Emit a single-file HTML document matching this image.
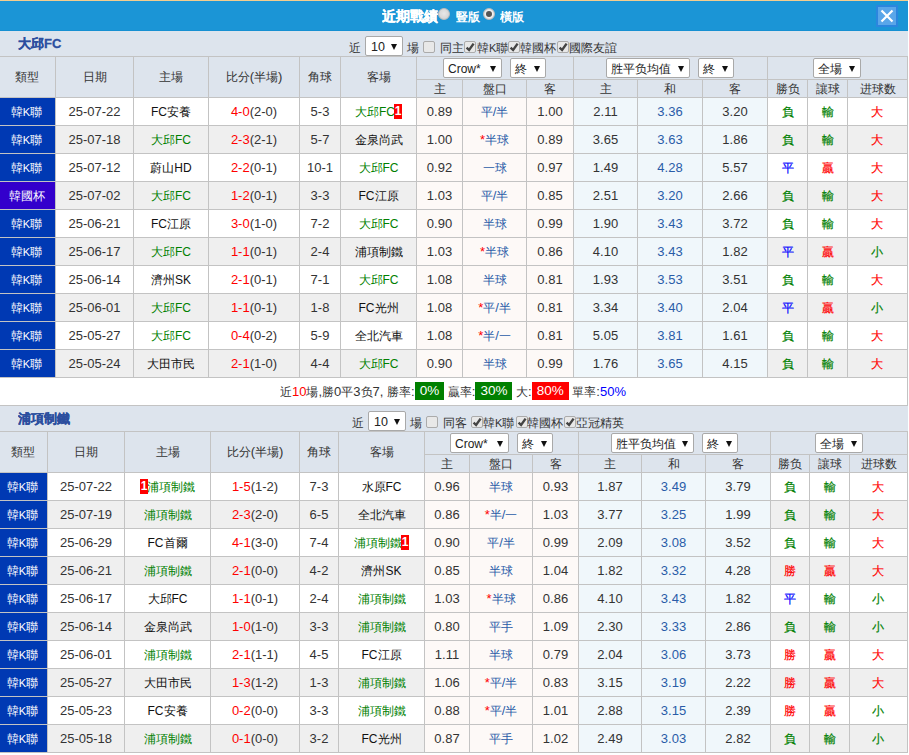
<!DOCTYPE html><html><head><meta charset="utf-8"><style>
html,body{margin:0;padding:0;background:#fff;width:909px;height:755px;overflow:hidden;position:relative;font-family:"Liberation Sans",sans-serif;}
.t,.h,.d{position:absolute;text-align:center;white-space:nowrap;overflow:hidden;}
.h{font-size:13px;color:#333;}
.d{font-size:13px;color:#333;}
.f{position:absolute;font-size:13px;color:#333;line-height:25px;white-space:nowrap}
.sel{position:absolute;background:#fff;border:1px solid #a9a9a9;border-radius:2px;font-size:13px;color:#222;text-align:center;white-space:nowrap}
.cb{position:absolute;width:10px;height:10px;border:1px solid #ababab;border-radius:2px;background:#e8e8e8;}
.ar{position:absolute;width:0;height:0;border-left:3.5px solid transparent;border-right:3.5px solid transparent;border-top:6px solid #111}
.radio{position:absolute;width:10px;height:10px;border-radius:50%;background:radial-gradient(circle at 50% 45%,#e8e8e8 0,#d8d8d8 60%,#c4c4c4 100%);border:1px solid #bdbdbd}
.radio.on{background:radial-gradient(circle,#f4f4f4 0,#f0f0f0 50%,#c8c8c8 100%)}.radio.on::after{content:"";position:absolute;left:2px;top:2px;width:6px;height:6px;border-radius:50%;background:#555}
.d .c,.h .c,.f .c,.sel .c{font-size:12px}
.lt{font-size:12px}
.rs .c{-webkit-text-stroke:0.2px currentColor}
.lk{font-size:11px}
.bd{display:inline-block;background:#f00;color:#fff;font-weight:bold;font-size:12px;line-height:15px;width:8px;text-align:center;vertical-align:middle;position:relative;top:-1px}
.gb{display:inline-block;background:#008000;color:#fff;font-size:13.5px;line-height:18px;padding:0 5px;vertical-align:middle;position:relative;top:-2px}
.rb{display:inline-block;background:#f00;color:#fff;font-size:13.5px;line-height:18px;padding:0 5px;vertical-align:middle;position:relative;top:-2px}
</style></head><body><div style="position:absolute;left:0px;top:0px;width:908px;height:1px;background:#f3cd8e"></div><div style="position:absolute;left:0px;top:1px;width:908px;height:30px;background:#1b95d6"></div><div style="position:absolute;left:0px;top:30px;width:908px;height:1px;background:#1690d2"></div><div class="t" style="left:382px;top:1px;width:58px;height:30px;line-height:30px;color:#fff;font-weight:bold;font-size:14px;text-align:left;-webkit-text-stroke:0.3px #fff"><span class="c">近期戰績</span></div><div class="radio" style="left:438px;top:8px"></div><div class="t" style="left:456px;top:2px;width:26px;height:30px;line-height:30px;color:#fff;font-weight:bold;font-size:12px;text-align:left"><span class="c">豎版</span></div><div class="radio on" style="left:483px;top:8px"></div><div class="t" style="left:500px;top:2px;width:30px;height:30px;line-height:30px;color:#fff;font-weight:bold;font-size:12px;text-align:left"><span class="c">橫版</span></div><div style="position:absolute;left:876px;top:5px;width:22px;height:22px;background:#2b86de"></div><div style="position:absolute;left:878px;top:7px;width:18px;height:18px;background:#5aa6e9"></div><svg style="position:absolute;left:878px;top:7px" width="18" height="18" viewBox="0 0 18 18"><path d="M3.5 3.5 L14.5 14.5 M14.5 3.5 L3.5 14.5" stroke="#fff" stroke-width="2.2"/></svg><div style="position:absolute;left:0px;top:31px;width:908px;height:25px;background:#dde4ed"></div><div class="t" style="left:18px;top:31px;width:182px;height:25px;line-height:25px;color:#2c4f9f;font-weight:bold;font-size:13px;text-align:left;-webkit-text-stroke:0.3px #2c4f9f"><span class="c">大邱</span>FC</div><div class="f" style="left:349px;top:35px"><span class="c">近</span></div><div class="sel" style="left:365px;top:36px;width:36px;height:18px;line-height:18px;text-align:left"><span style="position:absolute;left:5px;top:1px;font-size:12.5px">10</span><span class="ar" style="left:25px;top:7px"></span></div><div class="f" style="left:407px;top:35px"><span class="c">場</span></div><div class="cb" style="left:423px;top:41px"></div><div class="f" style="left:440px;top:35px"><span class="c">同主</span></div><div class="cb" style="left:464px;top:41px"><svg width="10" height="10" viewBox="0 0 10 10" style="position:absolute;left:0px;top:0px"><path d="M1.6 5.6 L4.1 8 L8.6 1.6" stroke="#444" stroke-width="2.4" fill="none"/></svg></div><div class="f" style="left:477px;top:35px"><span class="c">韓</span><span class=lk>K</span><span class="c">聯</span></div><div class="cb" style="left:508px;top:41px"><svg width="10" height="10" viewBox="0 0 10 10" style="position:absolute;left:0px;top:0px"><path d="M1.6 5.6 L4.1 8 L8.6 1.6" stroke="#444" stroke-width="2.4" fill="none"/></svg></div><div class="f" style="left:520px;top:35px"><span class="c">韓國杯</span></div><div class="cb" style="left:557px;top:41px"><svg width="10" height="10" viewBox="0 0 10 10" style="position:absolute;left:0px;top:0px"><path d="M1.6 5.6 L4.1 8 L8.6 1.6" stroke="#444" stroke-width="2.4" fill="none"/></svg></div><div class="f" style="left:569px;top:35px"><span class="c">國際友誼</span></div><div style="position:absolute;left:0px;top:56px;width:908px;height:41px;background:#dde4ed"></div><div style="position:absolute;left:0px;top:56px;width:908px;height:1px;background:#c3c3c3"></div><div style="position:absolute;left:416px;top:79px;width:492px;height:1px;background:#c3c3c3"></div><div style="position:absolute;left:0px;top:97px;width:908px;height:1px;background:#c3c3c3"></div><div style="position:absolute;left:55px;top:56px;width:1px;height:41px;background:#c3c3c3"></div><div style="position:absolute;left:133px;top:56px;width:1px;height:41px;background:#c3c3c3"></div><div style="position:absolute;left:208px;top:56px;width:1px;height:41px;background:#c3c3c3"></div><div style="position:absolute;left:299px;top:56px;width:1px;height:41px;background:#c3c3c3"></div><div style="position:absolute;left:340px;top:56px;width:1px;height:41px;background:#c3c3c3"></div><div style="position:absolute;left:416px;top:56px;width:1px;height:41px;background:#c3c3c3"></div><div style="position:absolute;left:462px;top:79px;width:1px;height:18px;background:#c3c3c3"></div><div style="position:absolute;left:526px;top:79px;width:1px;height:18px;background:#c3c3c3"></div><div style="position:absolute;left:573px;top:56px;width:1px;height:41px;background:#c3c3c3"></div><div style="position:absolute;left:637px;top:79px;width:1px;height:18px;background:#c3c3c3"></div><div style="position:absolute;left:702px;top:79px;width:1px;height:18px;background:#c3c3c3"></div><div style="position:absolute;left:767px;top:56px;width:1px;height:41px;background:#c3c3c3"></div><div style="position:absolute;left:807px;top:79px;width:1px;height:18px;background:#c3c3c3"></div><div style="position:absolute;left:847px;top:79px;width:1px;height:18px;background:#c3c3c3"></div><div style="position:absolute;left:907px;top:56px;width:1px;height:41px;background:#c3c3c3"></div><div class="h" style="left:0px;top:57px;width:53px;height:40px;line-height:40px;"><span class="c">類型</span></div><div class="h" style="left:56px;top:57px;width:77px;height:40px;line-height:40px;"><span class="c">日期</span></div><div class="h" style="left:134px;top:57px;width:74px;height:40px;line-height:40px;"><span class="c">主場</span></div><div class="h" style="left:209px;top:57px;width:90px;height:40px;line-height:40px;"><span class="c">比分</span>(<span class="c">半場</span>)</div><div class="h" style="left:300px;top:57px;width:40px;height:40px;line-height:40px;"><span class="c">角球</span></div><div class="h" style="left:341px;top:57px;width:75px;height:40px;line-height:40px;"><span class="c">客場</span></div><div class="h" style="left:417px;top:80px;width:45px;height:17px;line-height:17px;"><span class="c">主</span></div><div class="h" style="left:463px;top:80px;width:63px;height:17px;line-height:17px;"><span class="c">盤口</span></div><div class="h" style="left:527px;top:80px;width:46px;height:17px;line-height:17px;"><span class="c">客</span></div><div class="h" style="left:574px;top:80px;width:63px;height:17px;line-height:17px;"><span class="c">主</span></div><div class="h" style="left:638px;top:80px;width:64px;height:17px;line-height:17px;"><span class="c">和</span></div><div class="h" style="left:703px;top:80px;width:64px;height:17px;line-height:17px;"><span class="c">客</span></div><div class="h" style="left:768px;top:80px;width:39px;height:17px;line-height:17px;"><span class="c">勝负</span></div><div class="h" style="left:808px;top:80px;width:39px;height:17px;line-height:17px;"><span class="c">讓球</span></div><div class="h" style="left:848px;top:80px;width:59px;height:17px;line-height:17px;"><span class="c">进球数</span></div><div class="sel" style="left:443px;top:58px;width:57px;height:18px;line-height:18px;text-align:left"><span style="position:absolute;left:4px;top:1px;font-size:12px">Crow*</span><span class="ar" style="right:5px;top:7px"></span></div><div class="sel" style="left:510px;top:58px;width:34px;height:18px;line-height:18px;text-align:left"><span style="position:absolute;left:4px;top:1px;font-size:12px"><span class="c">終</span></span><span class="ar" style="right:5px;top:7px"></span></div><div class="sel" style="left:606px;top:58px;width:82px;height:18px;line-height:18px;text-align:left"><span style="position:absolute;left:4px;top:1px;font-size:12px"><span class="c">胜平负均值</span></span><span class="ar" style="right:5px;top:7px"></span></div><div class="sel" style="left:698px;top:58px;width:34px;height:18px;line-height:18px;text-align:left"><span style="position:absolute;left:4px;top:1px;font-size:12px"><span class="c">終</span></span><span class="ar" style="right:5px;top:7px"></span></div><div class="sel" style="left:813px;top:58px;width:46px;height:18px;line-height:18px;text-align:left"><span style="position:absolute;left:4px;top:1px;font-size:12px"><span class="c">全場</span></span><span class="ar" style="right:5px;top:7px"></span></div><div style="position:absolute;left:0px;top:98px;width:908px;height:27px;background:#ffffff"></div><div style="position:absolute;left:417px;top:98px;width:156px;height:27px;background:#fdf9f7"></div><div style="position:absolute;left:574px;top:98px;width:193px;height:27px;background:#f0f7fb"></div><div style="position:absolute;left:0px;top:98px;width:55px;height:27px;background:#0039b3"></div><div style="position:absolute;left:0px;top:125px;width:908px;height:1px;background:#c3c3c3"></div><div style="position:absolute;left:55px;top:98px;width:1px;height:27px;background:#c3c3c3"></div><div style="position:absolute;left:133px;top:98px;width:1px;height:27px;background:#c3c3c3"></div><div style="position:absolute;left:208px;top:98px;width:1px;height:27px;background:#c3c3c3"></div><div style="position:absolute;left:299px;top:98px;width:1px;height:27px;background:#c3c3c3"></div><div style="position:absolute;left:340px;top:98px;width:1px;height:27px;background:#c3c3c3"></div><div style="position:absolute;left:416px;top:98px;width:1px;height:27px;background:#c3c3c3"></div><div style="position:absolute;left:462px;top:98px;width:1px;height:27px;background:#c3c3c3"></div><div style="position:absolute;left:526px;top:98px;width:1px;height:27px;background:#c3c3c3"></div><div style="position:absolute;left:573px;top:98px;width:1px;height:27px;background:#c3c3c3"></div><div style="position:absolute;left:637px;top:98px;width:1px;height:27px;background:#c3c3c3"></div><div style="position:absolute;left:702px;top:98px;width:1px;height:27px;background:#c3c3c3"></div><div style="position:absolute;left:767px;top:98px;width:1px;height:27px;background:#c3c3c3"></div><div style="position:absolute;left:807px;top:98px;width:1px;height:27px;background:#c3c3c3"></div><div style="position:absolute;left:847px;top:98px;width:1px;height:27px;background:#c3c3c3"></div><div style="position:absolute;left:907px;top:98px;width:1px;height:27px;background:#c3c3c3"></div><div class="d" style="left:0px;top:98px;width:53px;height:27px;line-height:27px;"><span style="color:#fff"><span class="c">韓</span><span class=lk>K</span><span class="c">聯</span></span></div><div class="d" style="left:56px;top:98px;width:77px;height:27px;line-height:27px;">25-07-22</div><div class="d" style="left:134px;top:98px;width:74px;height:27px;line-height:27px;"><span style="color:#111"><span class="lt">FC</span><span class="c">安養</span></span></div><div class="d" style="left:209px;top:98px;width:90px;height:27px;line-height:27px;"><span style="color:#ff0000">4-0</span>(2-0)</div><div class="d" style="left:300px;top:98px;width:40px;height:27px;line-height:27px;">5-3</div><div class="d" style="left:341px;top:98px;width:75px;height:27px;line-height:27px;"><span style="color:#008000"><span class="c">大邱</span><span class="lt">FC</span></span><span class="bd" style="margin-left:-1px">1</span></div><div class="d" style="left:417px;top:98px;width:45px;height:27px;line-height:27px;">0.89</div><div class="d" style="left:463px;top:98px;width:63px;height:27px;line-height:27px;"><span style="color:#2a5ca8"><span class="c">平</span>/<span class="c">半</span></span></div><div class="d" style="left:527px;top:98px;width:46px;height:27px;line-height:27px;">1.00</div><div class="d" style="left:574px;top:98px;width:63px;height:27px;line-height:27px;">2.11</div><div class="d" style="left:638px;top:98px;width:64px;height:27px;line-height:27px;"><span style="color:#2a5ca8">3.36</span></div><div class="d" style="left:703px;top:98px;width:64px;height:27px;line-height:27px;">3.20</div><div class="d" style="left:768px;top:98px;width:39px;height:27px;line-height:27px;"><span class="rs" style="color:#008000"><span class="c">負</span></span></div><div class="d" style="left:808px;top:98px;width:39px;height:27px;line-height:27px;"><span class="rs" style="color:#008000"><span class="c">輸</span></span></div><div class="d" style="left:848px;top:98px;width:57px;height:27px;line-height:27px;"><span class="rs" style="color:#ff0000"><span class="c">大</span></span></div><div style="position:absolute;left:0px;top:126px;width:908px;height:27px;background:#efefef"></div><div style="position:absolute;left:417px;top:126px;width:156px;height:27px;background:#fdf9f7"></div><div style="position:absolute;left:574px;top:126px;width:193px;height:27px;background:#f0f7fb"></div><div style="position:absolute;left:0px;top:126px;width:55px;height:27px;background:#0039b3"></div><div style="position:absolute;left:0px;top:153px;width:908px;height:1px;background:#c3c3c3"></div><div style="position:absolute;left:55px;top:126px;width:1px;height:27px;background:#c3c3c3"></div><div style="position:absolute;left:133px;top:126px;width:1px;height:27px;background:#c3c3c3"></div><div style="position:absolute;left:208px;top:126px;width:1px;height:27px;background:#c3c3c3"></div><div style="position:absolute;left:299px;top:126px;width:1px;height:27px;background:#c3c3c3"></div><div style="position:absolute;left:340px;top:126px;width:1px;height:27px;background:#c3c3c3"></div><div style="position:absolute;left:416px;top:126px;width:1px;height:27px;background:#c3c3c3"></div><div style="position:absolute;left:462px;top:126px;width:1px;height:27px;background:#c3c3c3"></div><div style="position:absolute;left:526px;top:126px;width:1px;height:27px;background:#c3c3c3"></div><div style="position:absolute;left:573px;top:126px;width:1px;height:27px;background:#c3c3c3"></div><div style="position:absolute;left:637px;top:126px;width:1px;height:27px;background:#c3c3c3"></div><div style="position:absolute;left:702px;top:126px;width:1px;height:27px;background:#c3c3c3"></div><div style="position:absolute;left:767px;top:126px;width:1px;height:27px;background:#c3c3c3"></div><div style="position:absolute;left:807px;top:126px;width:1px;height:27px;background:#c3c3c3"></div><div style="position:absolute;left:847px;top:126px;width:1px;height:27px;background:#c3c3c3"></div><div style="position:absolute;left:907px;top:126px;width:1px;height:27px;background:#c3c3c3"></div><div class="d" style="left:0px;top:126px;width:53px;height:27px;line-height:27px;"><span style="color:#fff"><span class="c">韓</span><span class=lk>K</span><span class="c">聯</span></span></div><div class="d" style="left:56px;top:126px;width:77px;height:27px;line-height:27px;">25-07-18</div><div class="d" style="left:134px;top:126px;width:74px;height:27px;line-height:27px;"><span style="color:#008000"><span class="c">大邱</span><span class="lt">FC</span></span></div><div class="d" style="left:209px;top:126px;width:90px;height:27px;line-height:27px;"><span style="color:#ff0000">2-3</span>(2-1)</div><div class="d" style="left:300px;top:126px;width:40px;height:27px;line-height:27px;">5-7</div><div class="d" style="left:341px;top:126px;width:75px;height:27px;line-height:27px;"><span style="color:#111"><span class="c">金泉尚武</span></span></div><div class="d" style="left:417px;top:126px;width:45px;height:27px;line-height:27px;">1.00</div><div class="d" style="left:463px;top:126px;width:63px;height:27px;line-height:27px;"><span style="color:#ff0000">*</span><span style="color:#2a5ca8"><span class="c">半球</span></span></div><div class="d" style="left:527px;top:126px;width:46px;height:27px;line-height:27px;">0.89</div><div class="d" style="left:574px;top:126px;width:63px;height:27px;line-height:27px;">3.65</div><div class="d" style="left:638px;top:126px;width:64px;height:27px;line-height:27px;"><span style="color:#2a5ca8">3.63</span></div><div class="d" style="left:703px;top:126px;width:64px;height:27px;line-height:27px;">1.86</div><div class="d" style="left:768px;top:126px;width:39px;height:27px;line-height:27px;"><span class="rs" style="color:#008000"><span class="c">負</span></span></div><div class="d" style="left:808px;top:126px;width:39px;height:27px;line-height:27px;"><span class="rs" style="color:#008000"><span class="c">輸</span></span></div><div class="d" style="left:848px;top:126px;width:57px;height:27px;line-height:27px;"><span class="rs" style="color:#ff0000"><span class="c">大</span></span></div><div style="position:absolute;left:0px;top:154px;width:908px;height:27px;background:#ffffff"></div><div style="position:absolute;left:417px;top:154px;width:156px;height:27px;background:#fdf9f7"></div><div style="position:absolute;left:574px;top:154px;width:193px;height:27px;background:#f0f7fb"></div><div style="position:absolute;left:0px;top:154px;width:55px;height:27px;background:#0039b3"></div><div style="position:absolute;left:0px;top:181px;width:908px;height:1px;background:#c3c3c3"></div><div style="position:absolute;left:55px;top:154px;width:1px;height:27px;background:#c3c3c3"></div><div style="position:absolute;left:133px;top:154px;width:1px;height:27px;background:#c3c3c3"></div><div style="position:absolute;left:208px;top:154px;width:1px;height:27px;background:#c3c3c3"></div><div style="position:absolute;left:299px;top:154px;width:1px;height:27px;background:#c3c3c3"></div><div style="position:absolute;left:340px;top:154px;width:1px;height:27px;background:#c3c3c3"></div><div style="position:absolute;left:416px;top:154px;width:1px;height:27px;background:#c3c3c3"></div><div style="position:absolute;left:462px;top:154px;width:1px;height:27px;background:#c3c3c3"></div><div style="position:absolute;left:526px;top:154px;width:1px;height:27px;background:#c3c3c3"></div><div style="position:absolute;left:573px;top:154px;width:1px;height:27px;background:#c3c3c3"></div><div style="position:absolute;left:637px;top:154px;width:1px;height:27px;background:#c3c3c3"></div><div style="position:absolute;left:702px;top:154px;width:1px;height:27px;background:#c3c3c3"></div><div style="position:absolute;left:767px;top:154px;width:1px;height:27px;background:#c3c3c3"></div><div style="position:absolute;left:807px;top:154px;width:1px;height:27px;background:#c3c3c3"></div><div style="position:absolute;left:847px;top:154px;width:1px;height:27px;background:#c3c3c3"></div><div style="position:absolute;left:907px;top:154px;width:1px;height:27px;background:#c3c3c3"></div><div class="d" style="left:0px;top:154px;width:53px;height:27px;line-height:27px;"><span style="color:#fff"><span class="c">韓</span><span class=lk>K</span><span class="c">聯</span></span></div><div class="d" style="left:56px;top:154px;width:77px;height:27px;line-height:27px;">25-07-12</div><div class="d" style="left:134px;top:154px;width:74px;height:27px;line-height:27px;"><span style="color:#111"><span class="c">蔚山</span><span class="lt">HD</span></span></div><div class="d" style="left:209px;top:154px;width:90px;height:27px;line-height:27px;"><span style="color:#ff0000">2-2</span>(0-1)</div><div class="d" style="left:300px;top:154px;width:40px;height:27px;line-height:27px;">10-1</div><div class="d" style="left:341px;top:154px;width:75px;height:27px;line-height:27px;"><span style="color:#008000"><span class="c">大邱</span><span class="lt">FC</span></span></div><div class="d" style="left:417px;top:154px;width:45px;height:27px;line-height:27px;">0.92</div><div class="d" style="left:463px;top:154px;width:63px;height:27px;line-height:27px;"><span style="color:#2a5ca8"><span class="c">一球</span></span></div><div class="d" style="left:527px;top:154px;width:46px;height:27px;line-height:27px;">0.97</div><div class="d" style="left:574px;top:154px;width:63px;height:27px;line-height:27px;">1.49</div><div class="d" style="left:638px;top:154px;width:64px;height:27px;line-height:27px;"><span style="color:#2a5ca8">4.28</span></div><div class="d" style="left:703px;top:154px;width:64px;height:27px;line-height:27px;">5.57</div><div class="d" style="left:768px;top:154px;width:39px;height:27px;line-height:27px;"><span class="rs" style="color:#0000ff"><span class="c">平</span></span></div><div class="d" style="left:808px;top:154px;width:39px;height:27px;line-height:27px;"><span class="rs" style="color:#ff0000"><span class="c">贏</span></span></div><div class="d" style="left:848px;top:154px;width:57px;height:27px;line-height:27px;"><span class="rs" style="color:#ff0000"><span class="c">大</span></span></div><div style="position:absolute;left:0px;top:182px;width:908px;height:27px;background:#efefef"></div><div style="position:absolute;left:417px;top:182px;width:156px;height:27px;background:#fdf9f7"></div><div style="position:absolute;left:574px;top:182px;width:193px;height:27px;background:#f0f7fb"></div><div style="position:absolute;left:0px;top:182px;width:55px;height:27px;background:#3300cc"></div><div style="position:absolute;left:0px;top:209px;width:908px;height:1px;background:#c3c3c3"></div><div style="position:absolute;left:55px;top:182px;width:1px;height:27px;background:#c3c3c3"></div><div style="position:absolute;left:133px;top:182px;width:1px;height:27px;background:#c3c3c3"></div><div style="position:absolute;left:208px;top:182px;width:1px;height:27px;background:#c3c3c3"></div><div style="position:absolute;left:299px;top:182px;width:1px;height:27px;background:#c3c3c3"></div><div style="position:absolute;left:340px;top:182px;width:1px;height:27px;background:#c3c3c3"></div><div style="position:absolute;left:416px;top:182px;width:1px;height:27px;background:#c3c3c3"></div><div style="position:absolute;left:462px;top:182px;width:1px;height:27px;background:#c3c3c3"></div><div style="position:absolute;left:526px;top:182px;width:1px;height:27px;background:#c3c3c3"></div><div style="position:absolute;left:573px;top:182px;width:1px;height:27px;background:#c3c3c3"></div><div style="position:absolute;left:637px;top:182px;width:1px;height:27px;background:#c3c3c3"></div><div style="position:absolute;left:702px;top:182px;width:1px;height:27px;background:#c3c3c3"></div><div style="position:absolute;left:767px;top:182px;width:1px;height:27px;background:#c3c3c3"></div><div style="position:absolute;left:807px;top:182px;width:1px;height:27px;background:#c3c3c3"></div><div style="position:absolute;left:847px;top:182px;width:1px;height:27px;background:#c3c3c3"></div><div style="position:absolute;left:907px;top:182px;width:1px;height:27px;background:#c3c3c3"></div><div class="d" style="left:0px;top:182px;width:53px;height:27px;line-height:27px;"><span style="color:#fff"><span class="c">韓國杯</span></span></div><div class="d" style="left:56px;top:182px;width:77px;height:27px;line-height:27px;">25-07-02</div><div class="d" style="left:134px;top:182px;width:74px;height:27px;line-height:27px;"><span style="color:#008000"><span class="c">大邱</span><span class="lt">FC</span></span></div><div class="d" style="left:209px;top:182px;width:90px;height:27px;line-height:27px;"><span style="color:#ff0000">1-2</span>(0-1)</div><div class="d" style="left:300px;top:182px;width:40px;height:27px;line-height:27px;">3-3</div><div class="d" style="left:341px;top:182px;width:75px;height:27px;line-height:27px;"><span style="color:#111"><span class="lt">FC</span><span class="c">江原</span></span></div><div class="d" style="left:417px;top:182px;width:45px;height:27px;line-height:27px;">1.03</div><div class="d" style="left:463px;top:182px;width:63px;height:27px;line-height:27px;"><span style="color:#2a5ca8"><span class="c">平</span>/<span class="c">半</span></span></div><div class="d" style="left:527px;top:182px;width:46px;height:27px;line-height:27px;">0.85</div><div class="d" style="left:574px;top:182px;width:63px;height:27px;line-height:27px;">2.51</div><div class="d" style="left:638px;top:182px;width:64px;height:27px;line-height:27px;"><span style="color:#2a5ca8">3.20</span></div><div class="d" style="left:703px;top:182px;width:64px;height:27px;line-height:27px;">2.66</div><div class="d" style="left:768px;top:182px;width:39px;height:27px;line-height:27px;"><span class="rs" style="color:#008000"><span class="c">負</span></span></div><div class="d" style="left:808px;top:182px;width:39px;height:27px;line-height:27px;"><span class="rs" style="color:#008000"><span class="c">輸</span></span></div><div class="d" style="left:848px;top:182px;width:57px;height:27px;line-height:27px;"><span class="rs" style="color:#ff0000"><span class="c">大</span></span></div><div style="position:absolute;left:0px;top:210px;width:908px;height:27px;background:#ffffff"></div><div style="position:absolute;left:417px;top:210px;width:156px;height:27px;background:#fdf9f7"></div><div style="position:absolute;left:574px;top:210px;width:193px;height:27px;background:#f0f7fb"></div><div style="position:absolute;left:0px;top:210px;width:55px;height:27px;background:#0039b3"></div><div style="position:absolute;left:0px;top:237px;width:908px;height:1px;background:#c3c3c3"></div><div style="position:absolute;left:55px;top:210px;width:1px;height:27px;background:#c3c3c3"></div><div style="position:absolute;left:133px;top:210px;width:1px;height:27px;background:#c3c3c3"></div><div style="position:absolute;left:208px;top:210px;width:1px;height:27px;background:#c3c3c3"></div><div style="position:absolute;left:299px;top:210px;width:1px;height:27px;background:#c3c3c3"></div><div style="position:absolute;left:340px;top:210px;width:1px;height:27px;background:#c3c3c3"></div><div style="position:absolute;left:416px;top:210px;width:1px;height:27px;background:#c3c3c3"></div><div style="position:absolute;left:462px;top:210px;width:1px;height:27px;background:#c3c3c3"></div><div style="position:absolute;left:526px;top:210px;width:1px;height:27px;background:#c3c3c3"></div><div style="position:absolute;left:573px;top:210px;width:1px;height:27px;background:#c3c3c3"></div><div style="position:absolute;left:637px;top:210px;width:1px;height:27px;background:#c3c3c3"></div><div style="position:absolute;left:702px;top:210px;width:1px;height:27px;background:#c3c3c3"></div><div style="position:absolute;left:767px;top:210px;width:1px;height:27px;background:#c3c3c3"></div><div style="position:absolute;left:807px;top:210px;width:1px;height:27px;background:#c3c3c3"></div><div style="position:absolute;left:847px;top:210px;width:1px;height:27px;background:#c3c3c3"></div><div style="position:absolute;left:907px;top:210px;width:1px;height:27px;background:#c3c3c3"></div><div class="d" style="left:0px;top:210px;width:53px;height:27px;line-height:27px;"><span style="color:#fff"><span class="c">韓</span><span class=lk>K</span><span class="c">聯</span></span></div><div class="d" style="left:56px;top:210px;width:77px;height:27px;line-height:27px;">25-06-21</div><div class="d" style="left:134px;top:210px;width:74px;height:27px;line-height:27px;"><span style="color:#111"><span class="lt">FC</span><span class="c">江原</span></span></div><div class="d" style="left:209px;top:210px;width:90px;height:27px;line-height:27px;"><span style="color:#ff0000">3-0</span>(1-0)</div><div class="d" style="left:300px;top:210px;width:40px;height:27px;line-height:27px;">7-2</div><div class="d" style="left:341px;top:210px;width:75px;height:27px;line-height:27px;"><span style="color:#008000"><span class="c">大邱</span><span class="lt">FC</span></span></div><div class="d" style="left:417px;top:210px;width:45px;height:27px;line-height:27px;">0.90</div><div class="d" style="left:463px;top:210px;width:63px;height:27px;line-height:27px;"><span style="color:#2a5ca8"><span class="c">半球</span></span></div><div class="d" style="left:527px;top:210px;width:46px;height:27px;line-height:27px;">0.99</div><div class="d" style="left:574px;top:210px;width:63px;height:27px;line-height:27px;">1.90</div><div class="d" style="left:638px;top:210px;width:64px;height:27px;line-height:27px;"><span style="color:#2a5ca8">3.43</span></div><div class="d" style="left:703px;top:210px;width:64px;height:27px;line-height:27px;">3.72</div><div class="d" style="left:768px;top:210px;width:39px;height:27px;line-height:27px;"><span class="rs" style="color:#008000"><span class="c">負</span></span></div><div class="d" style="left:808px;top:210px;width:39px;height:27px;line-height:27px;"><span class="rs" style="color:#008000"><span class="c">輸</span></span></div><div class="d" style="left:848px;top:210px;width:57px;height:27px;line-height:27px;"><span class="rs" style="color:#ff0000"><span class="c">大</span></span></div><div style="position:absolute;left:0px;top:238px;width:908px;height:27px;background:#efefef"></div><div style="position:absolute;left:417px;top:238px;width:156px;height:27px;background:#fdf9f7"></div><div style="position:absolute;left:574px;top:238px;width:193px;height:27px;background:#f0f7fb"></div><div style="position:absolute;left:0px;top:238px;width:55px;height:27px;background:#0039b3"></div><div style="position:absolute;left:0px;top:265px;width:908px;height:1px;background:#c3c3c3"></div><div style="position:absolute;left:55px;top:238px;width:1px;height:27px;background:#c3c3c3"></div><div style="position:absolute;left:133px;top:238px;width:1px;height:27px;background:#c3c3c3"></div><div style="position:absolute;left:208px;top:238px;width:1px;height:27px;background:#c3c3c3"></div><div style="position:absolute;left:299px;top:238px;width:1px;height:27px;background:#c3c3c3"></div><div style="position:absolute;left:340px;top:238px;width:1px;height:27px;background:#c3c3c3"></div><div style="position:absolute;left:416px;top:238px;width:1px;height:27px;background:#c3c3c3"></div><div style="position:absolute;left:462px;top:238px;width:1px;height:27px;background:#c3c3c3"></div><div style="position:absolute;left:526px;top:238px;width:1px;height:27px;background:#c3c3c3"></div><div style="position:absolute;left:573px;top:238px;width:1px;height:27px;background:#c3c3c3"></div><div style="position:absolute;left:637px;top:238px;width:1px;height:27px;background:#c3c3c3"></div><div style="position:absolute;left:702px;top:238px;width:1px;height:27px;background:#c3c3c3"></div><div style="position:absolute;left:767px;top:238px;width:1px;height:27px;background:#c3c3c3"></div><div style="position:absolute;left:807px;top:238px;width:1px;height:27px;background:#c3c3c3"></div><div style="position:absolute;left:847px;top:238px;width:1px;height:27px;background:#c3c3c3"></div><div style="position:absolute;left:907px;top:238px;width:1px;height:27px;background:#c3c3c3"></div><div class="d" style="left:0px;top:238px;width:53px;height:27px;line-height:27px;"><span style="color:#fff"><span class="c">韓</span><span class=lk>K</span><span class="c">聯</span></span></div><div class="d" style="left:56px;top:238px;width:77px;height:27px;line-height:27px;">25-06-17</div><div class="d" style="left:134px;top:238px;width:74px;height:27px;line-height:27px;"><span style="color:#008000"><span class="c">大邱</span><span class="lt">FC</span></span></div><div class="d" style="left:209px;top:238px;width:90px;height:27px;line-height:27px;"><span style="color:#ff0000">1-1</span>(0-1)</div><div class="d" style="left:300px;top:238px;width:40px;height:27px;line-height:27px;">2-4</div><div class="d" style="left:341px;top:238px;width:75px;height:27px;line-height:27px;"><span style="color:#111"><span class="c">浦項制鐵</span></span></div><div class="d" style="left:417px;top:238px;width:45px;height:27px;line-height:27px;">1.03</div><div class="d" style="left:463px;top:238px;width:63px;height:27px;line-height:27px;"><span style="color:#ff0000">*</span><span style="color:#2a5ca8"><span class="c">半球</span></span></div><div class="d" style="left:527px;top:238px;width:46px;height:27px;line-height:27px;">0.86</div><div class="d" style="left:574px;top:238px;width:63px;height:27px;line-height:27px;">4.10</div><div class="d" style="left:638px;top:238px;width:64px;height:27px;line-height:27px;"><span style="color:#2a5ca8">3.43</span></div><div class="d" style="left:703px;top:238px;width:64px;height:27px;line-height:27px;">1.82</div><div class="d" style="left:768px;top:238px;width:39px;height:27px;line-height:27px;"><span class="rs" style="color:#0000ff"><span class="c">平</span></span></div><div class="d" style="left:808px;top:238px;width:39px;height:27px;line-height:27px;"><span class="rs" style="color:#ff0000"><span class="c">贏</span></span></div><div class="d" style="left:848px;top:238px;width:57px;height:27px;line-height:27px;"><span class="rs" style="color:#008000"><span class="c">小</span></span></div><div style="position:absolute;left:0px;top:266px;width:908px;height:27px;background:#ffffff"></div><div style="position:absolute;left:417px;top:266px;width:156px;height:27px;background:#fdf9f7"></div><div style="position:absolute;left:574px;top:266px;width:193px;height:27px;background:#f0f7fb"></div><div style="position:absolute;left:0px;top:266px;width:55px;height:27px;background:#0039b3"></div><div style="position:absolute;left:0px;top:293px;width:908px;height:1px;background:#c3c3c3"></div><div style="position:absolute;left:55px;top:266px;width:1px;height:27px;background:#c3c3c3"></div><div style="position:absolute;left:133px;top:266px;width:1px;height:27px;background:#c3c3c3"></div><div style="position:absolute;left:208px;top:266px;width:1px;height:27px;background:#c3c3c3"></div><div style="position:absolute;left:299px;top:266px;width:1px;height:27px;background:#c3c3c3"></div><div style="position:absolute;left:340px;top:266px;width:1px;height:27px;background:#c3c3c3"></div><div style="position:absolute;left:416px;top:266px;width:1px;height:27px;background:#c3c3c3"></div><div style="position:absolute;left:462px;top:266px;width:1px;height:27px;background:#c3c3c3"></div><div style="position:absolute;left:526px;top:266px;width:1px;height:27px;background:#c3c3c3"></div><div style="position:absolute;left:573px;top:266px;width:1px;height:27px;background:#c3c3c3"></div><div style="position:absolute;left:637px;top:266px;width:1px;height:27px;background:#c3c3c3"></div><div style="position:absolute;left:702px;top:266px;width:1px;height:27px;background:#c3c3c3"></div><div style="position:absolute;left:767px;top:266px;width:1px;height:27px;background:#c3c3c3"></div><div style="position:absolute;left:807px;top:266px;width:1px;height:27px;background:#c3c3c3"></div><div style="position:absolute;left:847px;top:266px;width:1px;height:27px;background:#c3c3c3"></div><div style="position:absolute;left:907px;top:266px;width:1px;height:27px;background:#c3c3c3"></div><div class="d" style="left:0px;top:266px;width:53px;height:27px;line-height:27px;"><span style="color:#fff"><span class="c">韓</span><span class=lk>K</span><span class="c">聯</span></span></div><div class="d" style="left:56px;top:266px;width:77px;height:27px;line-height:27px;">25-06-14</div><div class="d" style="left:134px;top:266px;width:74px;height:27px;line-height:27px;"><span style="color:#111"><span class="c">濟州</span><span class="lt">SK</span></span></div><div class="d" style="left:209px;top:266px;width:90px;height:27px;line-height:27px;"><span style="color:#ff0000">2-1</span>(0-1)</div><div class="d" style="left:300px;top:266px;width:40px;height:27px;line-height:27px;">7-1</div><div class="d" style="left:341px;top:266px;width:75px;height:27px;line-height:27px;"><span style="color:#008000"><span class="c">大邱</span><span class="lt">FC</span></span></div><div class="d" style="left:417px;top:266px;width:45px;height:27px;line-height:27px;">1.08</div><div class="d" style="left:463px;top:266px;width:63px;height:27px;line-height:27px;"><span style="color:#2a5ca8"><span class="c">半球</span></span></div><div class="d" style="left:527px;top:266px;width:46px;height:27px;line-height:27px;">0.81</div><div class="d" style="left:574px;top:266px;width:63px;height:27px;line-height:27px;">1.93</div><div class="d" style="left:638px;top:266px;width:64px;height:27px;line-height:27px;"><span style="color:#2a5ca8">3.53</span></div><div class="d" style="left:703px;top:266px;width:64px;height:27px;line-height:27px;">3.51</div><div class="d" style="left:768px;top:266px;width:39px;height:27px;line-height:27px;"><span class="rs" style="color:#008000"><span class="c">負</span></span></div><div class="d" style="left:808px;top:266px;width:39px;height:27px;line-height:27px;"><span class="rs" style="color:#008000"><span class="c">輸</span></span></div><div class="d" style="left:848px;top:266px;width:57px;height:27px;line-height:27px;"><span class="rs" style="color:#ff0000"><span class="c">大</span></span></div><div style="position:absolute;left:0px;top:294px;width:908px;height:27px;background:#efefef"></div><div style="position:absolute;left:417px;top:294px;width:156px;height:27px;background:#fdf9f7"></div><div style="position:absolute;left:574px;top:294px;width:193px;height:27px;background:#f0f7fb"></div><div style="position:absolute;left:0px;top:294px;width:55px;height:27px;background:#0039b3"></div><div style="position:absolute;left:0px;top:321px;width:908px;height:1px;background:#c3c3c3"></div><div style="position:absolute;left:55px;top:294px;width:1px;height:27px;background:#c3c3c3"></div><div style="position:absolute;left:133px;top:294px;width:1px;height:27px;background:#c3c3c3"></div><div style="position:absolute;left:208px;top:294px;width:1px;height:27px;background:#c3c3c3"></div><div style="position:absolute;left:299px;top:294px;width:1px;height:27px;background:#c3c3c3"></div><div style="position:absolute;left:340px;top:294px;width:1px;height:27px;background:#c3c3c3"></div><div style="position:absolute;left:416px;top:294px;width:1px;height:27px;background:#c3c3c3"></div><div style="position:absolute;left:462px;top:294px;width:1px;height:27px;background:#c3c3c3"></div><div style="position:absolute;left:526px;top:294px;width:1px;height:27px;background:#c3c3c3"></div><div style="position:absolute;left:573px;top:294px;width:1px;height:27px;background:#c3c3c3"></div><div style="position:absolute;left:637px;top:294px;width:1px;height:27px;background:#c3c3c3"></div><div style="position:absolute;left:702px;top:294px;width:1px;height:27px;background:#c3c3c3"></div><div style="position:absolute;left:767px;top:294px;width:1px;height:27px;background:#c3c3c3"></div><div style="position:absolute;left:807px;top:294px;width:1px;height:27px;background:#c3c3c3"></div><div style="position:absolute;left:847px;top:294px;width:1px;height:27px;background:#c3c3c3"></div><div style="position:absolute;left:907px;top:294px;width:1px;height:27px;background:#c3c3c3"></div><div class="d" style="left:0px;top:294px;width:53px;height:27px;line-height:27px;"><span style="color:#fff"><span class="c">韓</span><span class=lk>K</span><span class="c">聯</span></span></div><div class="d" style="left:56px;top:294px;width:77px;height:27px;line-height:27px;">25-06-01</div><div class="d" style="left:134px;top:294px;width:74px;height:27px;line-height:27px;"><span style="color:#008000"><span class="c">大邱</span><span class="lt">FC</span></span></div><div class="d" style="left:209px;top:294px;width:90px;height:27px;line-height:27px;"><span style="color:#ff0000">1-1</span>(0-1)</div><div class="d" style="left:300px;top:294px;width:40px;height:27px;line-height:27px;">1-8</div><div class="d" style="left:341px;top:294px;width:75px;height:27px;line-height:27px;"><span style="color:#111"><span class="lt">FC</span><span class="c">光州</span></span></div><div class="d" style="left:417px;top:294px;width:45px;height:27px;line-height:27px;">1.08</div><div class="d" style="left:463px;top:294px;width:63px;height:27px;line-height:27px;"><span style="color:#ff0000">*</span><span style="color:#2a5ca8"><span class="c">平</span>/<span class="c">半</span></span></div><div class="d" style="left:527px;top:294px;width:46px;height:27px;line-height:27px;">0.81</div><div class="d" style="left:574px;top:294px;width:63px;height:27px;line-height:27px;">3.34</div><div class="d" style="left:638px;top:294px;width:64px;height:27px;line-height:27px;"><span style="color:#2a5ca8">3.40</span></div><div class="d" style="left:703px;top:294px;width:64px;height:27px;line-height:27px;">2.04</div><div class="d" style="left:768px;top:294px;width:39px;height:27px;line-height:27px;"><span class="rs" style="color:#0000ff"><span class="c">平</span></span></div><div class="d" style="left:808px;top:294px;width:39px;height:27px;line-height:27px;"><span class="rs" style="color:#ff0000"><span class="c">贏</span></span></div><div class="d" style="left:848px;top:294px;width:57px;height:27px;line-height:27px;"><span class="rs" style="color:#008000"><span class="c">小</span></span></div><div style="position:absolute;left:0px;top:322px;width:908px;height:27px;background:#ffffff"></div><div style="position:absolute;left:417px;top:322px;width:156px;height:27px;background:#fdf9f7"></div><div style="position:absolute;left:574px;top:322px;width:193px;height:27px;background:#f0f7fb"></div><div style="position:absolute;left:0px;top:322px;width:55px;height:27px;background:#0039b3"></div><div style="position:absolute;left:0px;top:349px;width:908px;height:1px;background:#c3c3c3"></div><div style="position:absolute;left:55px;top:322px;width:1px;height:27px;background:#c3c3c3"></div><div style="position:absolute;left:133px;top:322px;width:1px;height:27px;background:#c3c3c3"></div><div style="position:absolute;left:208px;top:322px;width:1px;height:27px;background:#c3c3c3"></div><div style="position:absolute;left:299px;top:322px;width:1px;height:27px;background:#c3c3c3"></div><div style="position:absolute;left:340px;top:322px;width:1px;height:27px;background:#c3c3c3"></div><div style="position:absolute;left:416px;top:322px;width:1px;height:27px;background:#c3c3c3"></div><div style="position:absolute;left:462px;top:322px;width:1px;height:27px;background:#c3c3c3"></div><div style="position:absolute;left:526px;top:322px;width:1px;height:27px;background:#c3c3c3"></div><div style="position:absolute;left:573px;top:322px;width:1px;height:27px;background:#c3c3c3"></div><div style="position:absolute;left:637px;top:322px;width:1px;height:27px;background:#c3c3c3"></div><div style="position:absolute;left:702px;top:322px;width:1px;height:27px;background:#c3c3c3"></div><div style="position:absolute;left:767px;top:322px;width:1px;height:27px;background:#c3c3c3"></div><div style="position:absolute;left:807px;top:322px;width:1px;height:27px;background:#c3c3c3"></div><div style="position:absolute;left:847px;top:322px;width:1px;height:27px;background:#c3c3c3"></div><div style="position:absolute;left:907px;top:322px;width:1px;height:27px;background:#c3c3c3"></div><div class="d" style="left:0px;top:322px;width:53px;height:27px;line-height:27px;"><span style="color:#fff"><span class="c">韓</span><span class=lk>K</span><span class="c">聯</span></span></div><div class="d" style="left:56px;top:322px;width:77px;height:27px;line-height:27px;">25-05-27</div><div class="d" style="left:134px;top:322px;width:74px;height:27px;line-height:27px;"><span style="color:#008000"><span class="c">大邱</span><span class="lt">FC</span></span></div><div class="d" style="left:209px;top:322px;width:90px;height:27px;line-height:27px;"><span style="color:#ff0000">0-4</span>(0-2)</div><div class="d" style="left:300px;top:322px;width:40px;height:27px;line-height:27px;">5-9</div><div class="d" style="left:341px;top:322px;width:75px;height:27px;line-height:27px;"><span style="color:#111"><span class="c">全北汽車</span></span></div><div class="d" style="left:417px;top:322px;width:45px;height:27px;line-height:27px;">1.08</div><div class="d" style="left:463px;top:322px;width:63px;height:27px;line-height:27px;"><span style="color:#ff0000">*</span><span style="color:#2a5ca8"><span class="c">半</span>/<span class="c">一</span></span></div><div class="d" style="left:527px;top:322px;width:46px;height:27px;line-height:27px;">0.81</div><div class="d" style="left:574px;top:322px;width:63px;height:27px;line-height:27px;">5.05</div><div class="d" style="left:638px;top:322px;width:64px;height:27px;line-height:27px;"><span style="color:#2a5ca8">3.81</span></div><div class="d" style="left:703px;top:322px;width:64px;height:27px;line-height:27px;">1.61</div><div class="d" style="left:768px;top:322px;width:39px;height:27px;line-height:27px;"><span class="rs" style="color:#008000"><span class="c">負</span></span></div><div class="d" style="left:808px;top:322px;width:39px;height:27px;line-height:27px;"><span class="rs" style="color:#008000"><span class="c">輸</span></span></div><div class="d" style="left:848px;top:322px;width:57px;height:27px;line-height:27px;"><span class="rs" style="color:#ff0000"><span class="c">大</span></span></div><div style="position:absolute;left:0px;top:350px;width:908px;height:27px;background:#efefef"></div><div style="position:absolute;left:417px;top:350px;width:156px;height:27px;background:#fdf9f7"></div><div style="position:absolute;left:574px;top:350px;width:193px;height:27px;background:#f0f7fb"></div><div style="position:absolute;left:0px;top:350px;width:55px;height:27px;background:#0039b3"></div><div style="position:absolute;left:0px;top:377px;width:908px;height:1px;background:#c3c3c3"></div><div style="position:absolute;left:55px;top:350px;width:1px;height:27px;background:#c3c3c3"></div><div style="position:absolute;left:133px;top:350px;width:1px;height:27px;background:#c3c3c3"></div><div style="position:absolute;left:208px;top:350px;width:1px;height:27px;background:#c3c3c3"></div><div style="position:absolute;left:299px;top:350px;width:1px;height:27px;background:#c3c3c3"></div><div style="position:absolute;left:340px;top:350px;width:1px;height:27px;background:#c3c3c3"></div><div style="position:absolute;left:416px;top:350px;width:1px;height:27px;background:#c3c3c3"></div><div style="position:absolute;left:462px;top:350px;width:1px;height:27px;background:#c3c3c3"></div><div style="position:absolute;left:526px;top:350px;width:1px;height:27px;background:#c3c3c3"></div><div style="position:absolute;left:573px;top:350px;width:1px;height:27px;background:#c3c3c3"></div><div style="position:absolute;left:637px;top:350px;width:1px;height:27px;background:#c3c3c3"></div><div style="position:absolute;left:702px;top:350px;width:1px;height:27px;background:#c3c3c3"></div><div style="position:absolute;left:767px;top:350px;width:1px;height:27px;background:#c3c3c3"></div><div style="position:absolute;left:807px;top:350px;width:1px;height:27px;background:#c3c3c3"></div><div style="position:absolute;left:847px;top:350px;width:1px;height:27px;background:#c3c3c3"></div><div style="position:absolute;left:907px;top:350px;width:1px;height:27px;background:#c3c3c3"></div><div class="d" style="left:0px;top:350px;width:53px;height:27px;line-height:27px;"><span style="color:#fff"><span class="c">韓</span><span class=lk>K</span><span class="c">聯</span></span></div><div class="d" style="left:56px;top:350px;width:77px;height:27px;line-height:27px;">25-05-24</div><div class="d" style="left:134px;top:350px;width:74px;height:27px;line-height:27px;"><span style="color:#111"><span class="c">大田市民</span></span></div><div class="d" style="left:209px;top:350px;width:90px;height:27px;line-height:27px;"><span style="color:#ff0000">2-1</span>(1-0)</div><div class="d" style="left:300px;top:350px;width:40px;height:27px;line-height:27px;">4-4</div><div class="d" style="left:341px;top:350px;width:75px;height:27px;line-height:27px;"><span style="color:#008000"><span class="c">大邱</span><span class="lt">FC</span></span></div><div class="d" style="left:417px;top:350px;width:45px;height:27px;line-height:27px;">0.90</div><div class="d" style="left:463px;top:350px;width:63px;height:27px;line-height:27px;"><span style="color:#2a5ca8"><span class="c">半球</span></span></div><div class="d" style="left:527px;top:350px;width:46px;height:27px;line-height:27px;">0.99</div><div class="d" style="left:574px;top:350px;width:63px;height:27px;line-height:27px;">1.76</div><div class="d" style="left:638px;top:350px;width:64px;height:27px;line-height:27px;"><span style="color:#2a5ca8">3.65</span></div><div class="d" style="left:703px;top:350px;width:64px;height:27px;line-height:27px;">4.15</div><div class="d" style="left:768px;top:350px;width:39px;height:27px;line-height:27px;"><span class="rs" style="color:#008000"><span class="c">負</span></span></div><div class="d" style="left:808px;top:350px;width:39px;height:27px;line-height:27px;"><span class="rs" style="color:#008000"><span class="c">輸</span></span></div><div class="d" style="left:848px;top:350px;width:57px;height:27px;line-height:27px;"><span class="rs" style="color:#ff0000"><span class="c">大</span></span></div><div style="position:absolute;left:0px;top:378px;width:908px;height:27px;background:#ffffff"></div><div style="position:absolute;left:0px;top:405px;width:908px;height:1px;background:#c3c3c3"></div><div style="position:absolute;left:907px;top:378px;width:1px;height:27px;background:#c3c3c3"></div><div class="d" style="left:280px;top:378px;width:620px;height:27px;line-height:27px;text-align:left"><span class="c">近</span><span style="color:#ff0000">10</span><span class="c">場</span>,<span class="c">勝</span>0<span class="c">平</span>3<span class="c">负</span>7, <span class="c">勝率</span>:<span class="gb">0%</span> <span class="c">贏率</span>:<span class="gb">30%</span> <span class="c">大</span>:<span class="rb">80%</span> <span class="c">單率</span>:<span style="color:#0000ff">50%</span></div><div style="position:absolute;left:0px;top:406px;width:908px;height:25px;background:#dde4ed"></div><div class="t" style="left:18px;top:406px;width:182px;height:25px;line-height:25px;color:#2c4f9f;font-weight:bold;font-size:13px;text-align:left;-webkit-text-stroke:0.3px #2c4f9f"><span class="c">浦項制鐵</span></div><div class="f" style="left:352px;top:410px"><span class="c">近</span></div><div class="sel" style="left:368px;top:411px;width:36px;height:18px;line-height:18px;text-align:left"><span style="position:absolute;left:5px;top:1px;font-size:12.5px">10</span><span class="ar" style="left:25px;top:7px"></span></div><div class="f" style="left:410px;top:410px"><span class="c">場</span></div><div class="cb" style="left:426px;top:416px"></div><div class="f" style="left:443px;top:410px"><span class="c">同客</span></div><div class="cb" style="left:471px;top:416px"><svg width="10" height="10" viewBox="0 0 10 10" style="position:absolute;left:0px;top:0px"><path d="M1.6 5.6 L4.1 8 L8.6 1.6" stroke="#444" stroke-width="2.4" fill="none"/></svg></div><div class="f" style="left:483px;top:410px"><span class="c">韓</span><span class=lk>K</span><span class="c">聯</span></div><div class="cb" style="left:516px;top:416px"><svg width="10" height="10" viewBox="0 0 10 10" style="position:absolute;left:0px;top:0px"><path d="M1.6 5.6 L4.1 8 L8.6 1.6" stroke="#444" stroke-width="2.4" fill="none"/></svg></div><div class="f" style="left:527px;top:410px"><span class="c">韓國杯</span></div><div class="cb" style="left:564px;top:416px"><svg width="10" height="10" viewBox="0 0 10 10" style="position:absolute;left:0px;top:0px"><path d="M1.6 5.6 L4.1 8 L8.6 1.6" stroke="#444" stroke-width="2.4" fill="none"/></svg></div><div class="f" style="left:576px;top:410px"><span class="c">亞冠精英</span></div><div style="position:absolute;left:0px;top:431px;width:908px;height:41px;background:#dde4ed"></div><div style="position:absolute;left:0px;top:431px;width:908px;height:1px;background:#c3c3c3"></div><div style="position:absolute;left:424px;top:454px;width:484px;height:1px;background:#c3c3c3"></div><div style="position:absolute;left:0px;top:472px;width:908px;height:1px;background:#c3c3c3"></div><div style="position:absolute;left:47px;top:431px;width:1px;height:41px;background:#c3c3c3"></div><div style="position:absolute;left:124px;top:431px;width:1px;height:41px;background:#c3c3c3"></div><div style="position:absolute;left:210px;top:431px;width:1px;height:41px;background:#c3c3c3"></div><div style="position:absolute;left:299px;top:431px;width:1px;height:41px;background:#c3c3c3"></div><div style="position:absolute;left:338px;top:431px;width:1px;height:41px;background:#c3c3c3"></div><div style="position:absolute;left:424px;top:431px;width:1px;height:41px;background:#c3c3c3"></div><div style="position:absolute;left:469px;top:454px;width:1px;height:18px;background:#c3c3c3"></div><div style="position:absolute;left:532px;top:454px;width:1px;height:18px;background:#c3c3c3"></div><div style="position:absolute;left:578px;top:431px;width:1px;height:41px;background:#c3c3c3"></div><div style="position:absolute;left:641px;top:454px;width:1px;height:18px;background:#c3c3c3"></div><div style="position:absolute;left:705px;top:454px;width:1px;height:18px;background:#c3c3c3"></div><div style="position:absolute;left:770px;top:431px;width:1px;height:41px;background:#c3c3c3"></div><div style="position:absolute;left:809px;top:454px;width:1px;height:18px;background:#c3c3c3"></div><div style="position:absolute;left:849px;top:454px;width:1px;height:18px;background:#c3c3c3"></div><div style="position:absolute;left:907px;top:431px;width:1px;height:41px;background:#c3c3c3"></div><div class="h" style="left:0px;top:432px;width:45px;height:40px;line-height:40px;"><span class="c">類型</span></div><div class="h" style="left:48px;top:432px;width:76px;height:40px;line-height:40px;"><span class="c">日期</span></div><div class="h" style="left:125px;top:432px;width:85px;height:40px;line-height:40px;"><span class="c">主場</span></div><div class="h" style="left:211px;top:432px;width:88px;height:40px;line-height:40px;"><span class="c">比分</span>(<span class="c">半場</span>)</div><div class="h" style="left:300px;top:432px;width:38px;height:40px;line-height:40px;"><span class="c">角球</span></div><div class="h" style="left:339px;top:432px;width:85px;height:40px;line-height:40px;"><span class="c">客場</span></div><div class="h" style="left:425px;top:455px;width:44px;height:17px;line-height:17px;"><span class="c">主</span></div><div class="h" style="left:470px;top:455px;width:62px;height:17px;line-height:17px;"><span class="c">盤口</span></div><div class="h" style="left:533px;top:455px;width:45px;height:17px;line-height:17px;"><span class="c">客</span></div><div class="h" style="left:579px;top:455px;width:62px;height:17px;line-height:17px;"><span class="c">主</span></div><div class="h" style="left:642px;top:455px;width:63px;height:17px;line-height:17px;"><span class="c">和</span></div><div class="h" style="left:706px;top:455px;width:64px;height:17px;line-height:17px;"><span class="c">客</span></div><div class="h" style="left:771px;top:455px;width:38px;height:17px;line-height:17px;"><span class="c">勝负</span></div><div class="h" style="left:810px;top:455px;width:39px;height:17px;line-height:17px;"><span class="c">讓球</span></div><div class="h" style="left:850px;top:455px;width:57px;height:17px;line-height:17px;"><span class="c">进球数</span></div><div class="sel" style="left:450px;top:433px;width:57px;height:18px;line-height:18px;text-align:left"><span style="position:absolute;left:4px;top:1px;font-size:12px">Crow*</span><span class="ar" style="right:5px;top:7px"></span></div><div class="sel" style="left:517px;top:433px;width:34px;height:18px;line-height:18px;text-align:left"><span style="position:absolute;left:4px;top:1px;font-size:12px"><span class="c">終</span></span><span class="ar" style="right:5px;top:7px"></span></div><div class="sel" style="left:611px;top:433px;width:81px;height:18px;line-height:18px;text-align:left"><span style="position:absolute;left:4px;top:1px;font-size:12px"><span class="c">胜平负均值</span></span><span class="ar" style="right:5px;top:7px"></span></div><div class="sel" style="left:702px;top:433px;width:34px;height:18px;line-height:18px;text-align:left"><span style="position:absolute;left:4px;top:1px;font-size:12px"><span class="c">終</span></span><span class="ar" style="right:5px;top:7px"></span></div><div class="sel" style="left:815px;top:433px;width:46px;height:18px;line-height:18px;text-align:left"><span style="position:absolute;left:4px;top:1px;font-size:12px"><span class="c">全場</span></span><span class="ar" style="right:5px;top:7px"></span></div><div style="position:absolute;left:0px;top:473px;width:908px;height:27px;background:#ffffff"></div><div style="position:absolute;left:425px;top:473px;width:153px;height:27px;background:#fdf9f7"></div><div style="position:absolute;left:579px;top:473px;width:191px;height:27px;background:#f0f7fb"></div><div style="position:absolute;left:0px;top:473px;width:47px;height:27px;background:#0039b3"></div><div style="position:absolute;left:0px;top:500px;width:908px;height:1px;background:#c3c3c3"></div><div style="position:absolute;left:47px;top:473px;width:1px;height:27px;background:#c3c3c3"></div><div style="position:absolute;left:124px;top:473px;width:1px;height:27px;background:#c3c3c3"></div><div style="position:absolute;left:210px;top:473px;width:1px;height:27px;background:#c3c3c3"></div><div style="position:absolute;left:299px;top:473px;width:1px;height:27px;background:#c3c3c3"></div><div style="position:absolute;left:338px;top:473px;width:1px;height:27px;background:#c3c3c3"></div><div style="position:absolute;left:424px;top:473px;width:1px;height:27px;background:#c3c3c3"></div><div style="position:absolute;left:469px;top:473px;width:1px;height:27px;background:#c3c3c3"></div><div style="position:absolute;left:532px;top:473px;width:1px;height:27px;background:#c3c3c3"></div><div style="position:absolute;left:578px;top:473px;width:1px;height:27px;background:#c3c3c3"></div><div style="position:absolute;left:641px;top:473px;width:1px;height:27px;background:#c3c3c3"></div><div style="position:absolute;left:705px;top:473px;width:1px;height:27px;background:#c3c3c3"></div><div style="position:absolute;left:770px;top:473px;width:1px;height:27px;background:#c3c3c3"></div><div style="position:absolute;left:809px;top:473px;width:1px;height:27px;background:#c3c3c3"></div><div style="position:absolute;left:849px;top:473px;width:1px;height:27px;background:#c3c3c3"></div><div style="position:absolute;left:907px;top:473px;width:1px;height:27px;background:#c3c3c3"></div><div class="d" style="left:0px;top:473px;width:45px;height:27px;line-height:27px;"><span style="color:#fff"><span class="c">韓</span><span class=lk>K</span><span class="c">聯</span></span></div><div class="d" style="left:48px;top:473px;width:76px;height:27px;line-height:27px;">25-07-22</div><div class="d" style="left:125px;top:473px;width:85px;height:27px;line-height:27px;"><span class="bd" style="margin-right:-1px">1</span><span style="color:#008000"><span class="c">浦項制鐵</span></span></div><div class="d" style="left:211px;top:473px;width:88px;height:27px;line-height:27px;"><span style="color:#ff0000">1-5</span>(1-2)</div><div class="d" style="left:300px;top:473px;width:38px;height:27px;line-height:27px;">7-3</div><div class="d" style="left:339px;top:473px;width:85px;height:27px;line-height:27px;"><span style="color:#111"><span class="c">水原</span><span class="lt">FC</span></span></div><div class="d" style="left:425px;top:473px;width:44px;height:27px;line-height:27px;">0.96</div><div class="d" style="left:470px;top:473px;width:62px;height:27px;line-height:27px;"><span style="color:#2a5ca8"><span class="c">半球</span></span></div><div class="d" style="left:533px;top:473px;width:45px;height:27px;line-height:27px;">0.93</div><div class="d" style="left:579px;top:473px;width:62px;height:27px;line-height:27px;">1.87</div><div class="d" style="left:642px;top:473px;width:63px;height:27px;line-height:27px;"><span style="color:#2a5ca8">3.49</span></div><div class="d" style="left:706px;top:473px;width:64px;height:27px;line-height:27px;">3.79</div><div class="d" style="left:771px;top:473px;width:38px;height:27px;line-height:27px;"><span class="rs" style="color:#008000"><span class="c">負</span></span></div><div class="d" style="left:810px;top:473px;width:39px;height:27px;line-height:27px;"><span class="rs" style="color:#008000"><span class="c">輸</span></span></div><div class="d" style="left:850px;top:473px;width:55px;height:27px;line-height:27px;"><span class="rs" style="color:#ff0000"><span class="c">大</span></span></div><div style="position:absolute;left:0px;top:501px;width:908px;height:27px;background:#efefef"></div><div style="position:absolute;left:425px;top:501px;width:153px;height:27px;background:#fdf9f7"></div><div style="position:absolute;left:579px;top:501px;width:191px;height:27px;background:#f0f7fb"></div><div style="position:absolute;left:0px;top:501px;width:47px;height:27px;background:#0039b3"></div><div style="position:absolute;left:0px;top:528px;width:908px;height:1px;background:#c3c3c3"></div><div style="position:absolute;left:47px;top:501px;width:1px;height:27px;background:#c3c3c3"></div><div style="position:absolute;left:124px;top:501px;width:1px;height:27px;background:#c3c3c3"></div><div style="position:absolute;left:210px;top:501px;width:1px;height:27px;background:#c3c3c3"></div><div style="position:absolute;left:299px;top:501px;width:1px;height:27px;background:#c3c3c3"></div><div style="position:absolute;left:338px;top:501px;width:1px;height:27px;background:#c3c3c3"></div><div style="position:absolute;left:424px;top:501px;width:1px;height:27px;background:#c3c3c3"></div><div style="position:absolute;left:469px;top:501px;width:1px;height:27px;background:#c3c3c3"></div><div style="position:absolute;left:532px;top:501px;width:1px;height:27px;background:#c3c3c3"></div><div style="position:absolute;left:578px;top:501px;width:1px;height:27px;background:#c3c3c3"></div><div style="position:absolute;left:641px;top:501px;width:1px;height:27px;background:#c3c3c3"></div><div style="position:absolute;left:705px;top:501px;width:1px;height:27px;background:#c3c3c3"></div><div style="position:absolute;left:770px;top:501px;width:1px;height:27px;background:#c3c3c3"></div><div style="position:absolute;left:809px;top:501px;width:1px;height:27px;background:#c3c3c3"></div><div style="position:absolute;left:849px;top:501px;width:1px;height:27px;background:#c3c3c3"></div><div style="position:absolute;left:907px;top:501px;width:1px;height:27px;background:#c3c3c3"></div><div class="d" style="left:0px;top:501px;width:45px;height:27px;line-height:27px;"><span style="color:#fff"><span class="c">韓</span><span class=lk>K</span><span class="c">聯</span></span></div><div class="d" style="left:48px;top:501px;width:76px;height:27px;line-height:27px;">25-07-19</div><div class="d" style="left:125px;top:501px;width:85px;height:27px;line-height:27px;"><span style="color:#008000"><span class="c">浦項制鐵</span></span></div><div class="d" style="left:211px;top:501px;width:88px;height:27px;line-height:27px;"><span style="color:#ff0000">2-3</span>(2-0)</div><div class="d" style="left:300px;top:501px;width:38px;height:27px;line-height:27px;">6-5</div><div class="d" style="left:339px;top:501px;width:85px;height:27px;line-height:27px;"><span style="color:#111"><span class="c">全北汽車</span></span></div><div class="d" style="left:425px;top:501px;width:44px;height:27px;line-height:27px;">0.86</div><div class="d" style="left:470px;top:501px;width:62px;height:27px;line-height:27px;"><span style="color:#ff0000">*</span><span style="color:#2a5ca8"><span class="c">半</span>/<span class="c">一</span></span></div><div class="d" style="left:533px;top:501px;width:45px;height:27px;line-height:27px;">1.03</div><div class="d" style="left:579px;top:501px;width:62px;height:27px;line-height:27px;">3.77</div><div class="d" style="left:642px;top:501px;width:63px;height:27px;line-height:27px;"><span style="color:#2a5ca8">3.25</span></div><div class="d" style="left:706px;top:501px;width:64px;height:27px;line-height:27px;">1.99</div><div class="d" style="left:771px;top:501px;width:38px;height:27px;line-height:27px;"><span class="rs" style="color:#008000"><span class="c">負</span></span></div><div class="d" style="left:810px;top:501px;width:39px;height:27px;line-height:27px;"><span class="rs" style="color:#008000"><span class="c">輸</span></span></div><div class="d" style="left:850px;top:501px;width:55px;height:27px;line-height:27px;"><span class="rs" style="color:#ff0000"><span class="c">大</span></span></div><div style="position:absolute;left:0px;top:529px;width:908px;height:27px;background:#ffffff"></div><div style="position:absolute;left:425px;top:529px;width:153px;height:27px;background:#fdf9f7"></div><div style="position:absolute;left:579px;top:529px;width:191px;height:27px;background:#f0f7fb"></div><div style="position:absolute;left:0px;top:529px;width:47px;height:27px;background:#0039b3"></div><div style="position:absolute;left:0px;top:556px;width:908px;height:1px;background:#c3c3c3"></div><div style="position:absolute;left:47px;top:529px;width:1px;height:27px;background:#c3c3c3"></div><div style="position:absolute;left:124px;top:529px;width:1px;height:27px;background:#c3c3c3"></div><div style="position:absolute;left:210px;top:529px;width:1px;height:27px;background:#c3c3c3"></div><div style="position:absolute;left:299px;top:529px;width:1px;height:27px;background:#c3c3c3"></div><div style="position:absolute;left:338px;top:529px;width:1px;height:27px;background:#c3c3c3"></div><div style="position:absolute;left:424px;top:529px;width:1px;height:27px;background:#c3c3c3"></div><div style="position:absolute;left:469px;top:529px;width:1px;height:27px;background:#c3c3c3"></div><div style="position:absolute;left:532px;top:529px;width:1px;height:27px;background:#c3c3c3"></div><div style="position:absolute;left:578px;top:529px;width:1px;height:27px;background:#c3c3c3"></div><div style="position:absolute;left:641px;top:529px;width:1px;height:27px;background:#c3c3c3"></div><div style="position:absolute;left:705px;top:529px;width:1px;height:27px;background:#c3c3c3"></div><div style="position:absolute;left:770px;top:529px;width:1px;height:27px;background:#c3c3c3"></div><div style="position:absolute;left:809px;top:529px;width:1px;height:27px;background:#c3c3c3"></div><div style="position:absolute;left:849px;top:529px;width:1px;height:27px;background:#c3c3c3"></div><div style="position:absolute;left:907px;top:529px;width:1px;height:27px;background:#c3c3c3"></div><div class="d" style="left:0px;top:529px;width:45px;height:27px;line-height:27px;"><span style="color:#fff"><span class="c">韓</span><span class=lk>K</span><span class="c">聯</span></span></div><div class="d" style="left:48px;top:529px;width:76px;height:27px;line-height:27px;">25-06-29</div><div class="d" style="left:125px;top:529px;width:85px;height:27px;line-height:27px;"><span style="color:#111"><span class="lt">FC</span><span class="c">首爾</span></span></div><div class="d" style="left:211px;top:529px;width:88px;height:27px;line-height:27px;"><span style="color:#ff0000">4-1</span>(3-0)</div><div class="d" style="left:300px;top:529px;width:38px;height:27px;line-height:27px;">7-4</div><div class="d" style="left:339px;top:529px;width:85px;height:27px;line-height:27px;"><span style="color:#008000"><span class="c">浦項制鐵</span></span><span class="bd" style="margin-left:-1px">1</span></div><div class="d" style="left:425px;top:529px;width:44px;height:27px;line-height:27px;">0.90</div><div class="d" style="left:470px;top:529px;width:62px;height:27px;line-height:27px;"><span style="color:#2a5ca8"><span class="c">平</span>/<span class="c">半</span></span></div><div class="d" style="left:533px;top:529px;width:45px;height:27px;line-height:27px;">0.99</div><div class="d" style="left:579px;top:529px;width:62px;height:27px;line-height:27px;">2.09</div><div class="d" style="left:642px;top:529px;width:63px;height:27px;line-height:27px;"><span style="color:#2a5ca8">3.08</span></div><div class="d" style="left:706px;top:529px;width:64px;height:27px;line-height:27px;">3.52</div><div class="d" style="left:771px;top:529px;width:38px;height:27px;line-height:27px;"><span class="rs" style="color:#008000"><span class="c">負</span></span></div><div class="d" style="left:810px;top:529px;width:39px;height:27px;line-height:27px;"><span class="rs" style="color:#008000"><span class="c">輸</span></span></div><div class="d" style="left:850px;top:529px;width:55px;height:27px;line-height:27px;"><span class="rs" style="color:#ff0000"><span class="c">大</span></span></div><div style="position:absolute;left:0px;top:557px;width:908px;height:27px;background:#efefef"></div><div style="position:absolute;left:425px;top:557px;width:153px;height:27px;background:#fdf9f7"></div><div style="position:absolute;left:579px;top:557px;width:191px;height:27px;background:#f0f7fb"></div><div style="position:absolute;left:0px;top:557px;width:47px;height:27px;background:#0039b3"></div><div style="position:absolute;left:0px;top:584px;width:908px;height:1px;background:#c3c3c3"></div><div style="position:absolute;left:47px;top:557px;width:1px;height:27px;background:#c3c3c3"></div><div style="position:absolute;left:124px;top:557px;width:1px;height:27px;background:#c3c3c3"></div><div style="position:absolute;left:210px;top:557px;width:1px;height:27px;background:#c3c3c3"></div><div style="position:absolute;left:299px;top:557px;width:1px;height:27px;background:#c3c3c3"></div><div style="position:absolute;left:338px;top:557px;width:1px;height:27px;background:#c3c3c3"></div><div style="position:absolute;left:424px;top:557px;width:1px;height:27px;background:#c3c3c3"></div><div style="position:absolute;left:469px;top:557px;width:1px;height:27px;background:#c3c3c3"></div><div style="position:absolute;left:532px;top:557px;width:1px;height:27px;background:#c3c3c3"></div><div style="position:absolute;left:578px;top:557px;width:1px;height:27px;background:#c3c3c3"></div><div style="position:absolute;left:641px;top:557px;width:1px;height:27px;background:#c3c3c3"></div><div style="position:absolute;left:705px;top:557px;width:1px;height:27px;background:#c3c3c3"></div><div style="position:absolute;left:770px;top:557px;width:1px;height:27px;background:#c3c3c3"></div><div style="position:absolute;left:809px;top:557px;width:1px;height:27px;background:#c3c3c3"></div><div style="position:absolute;left:849px;top:557px;width:1px;height:27px;background:#c3c3c3"></div><div style="position:absolute;left:907px;top:557px;width:1px;height:27px;background:#c3c3c3"></div><div class="d" style="left:0px;top:557px;width:45px;height:27px;line-height:27px;"><span style="color:#fff"><span class="c">韓</span><span class=lk>K</span><span class="c">聯</span></span></div><div class="d" style="left:48px;top:557px;width:76px;height:27px;line-height:27px;">25-06-21</div><div class="d" style="left:125px;top:557px;width:85px;height:27px;line-height:27px;"><span style="color:#008000"><span class="c">浦項制鐵</span></span></div><div class="d" style="left:211px;top:557px;width:88px;height:27px;line-height:27px;"><span style="color:#ff0000">2-1</span>(0-0)</div><div class="d" style="left:300px;top:557px;width:38px;height:27px;line-height:27px;">4-2</div><div class="d" style="left:339px;top:557px;width:85px;height:27px;line-height:27px;"><span style="color:#111"><span class="c">濟州</span><span class="lt">SK</span></span></div><div class="d" style="left:425px;top:557px;width:44px;height:27px;line-height:27px;">0.85</div><div class="d" style="left:470px;top:557px;width:62px;height:27px;line-height:27px;"><span style="color:#2a5ca8"><span class="c">半球</span></span></div><div class="d" style="left:533px;top:557px;width:45px;height:27px;line-height:27px;">1.04</div><div class="d" style="left:579px;top:557px;width:62px;height:27px;line-height:27px;">1.82</div><div class="d" style="left:642px;top:557px;width:63px;height:27px;line-height:27px;"><span style="color:#2a5ca8">3.32</span></div><div class="d" style="left:706px;top:557px;width:64px;height:27px;line-height:27px;">4.28</div><div class="d" style="left:771px;top:557px;width:38px;height:27px;line-height:27px;"><span class="rs" style="color:#ff0000"><span class="c">勝</span></span></div><div class="d" style="left:810px;top:557px;width:39px;height:27px;line-height:27px;"><span class="rs" style="color:#ff0000"><span class="c">贏</span></span></div><div class="d" style="left:850px;top:557px;width:55px;height:27px;line-height:27px;"><span class="rs" style="color:#ff0000"><span class="c">大</span></span></div><div style="position:absolute;left:0px;top:585px;width:908px;height:27px;background:#ffffff"></div><div style="position:absolute;left:425px;top:585px;width:153px;height:27px;background:#fdf9f7"></div><div style="position:absolute;left:579px;top:585px;width:191px;height:27px;background:#f0f7fb"></div><div style="position:absolute;left:0px;top:585px;width:47px;height:27px;background:#0039b3"></div><div style="position:absolute;left:0px;top:612px;width:908px;height:1px;background:#c3c3c3"></div><div style="position:absolute;left:47px;top:585px;width:1px;height:27px;background:#c3c3c3"></div><div style="position:absolute;left:124px;top:585px;width:1px;height:27px;background:#c3c3c3"></div><div style="position:absolute;left:210px;top:585px;width:1px;height:27px;background:#c3c3c3"></div><div style="position:absolute;left:299px;top:585px;width:1px;height:27px;background:#c3c3c3"></div><div style="position:absolute;left:338px;top:585px;width:1px;height:27px;background:#c3c3c3"></div><div style="position:absolute;left:424px;top:585px;width:1px;height:27px;background:#c3c3c3"></div><div style="position:absolute;left:469px;top:585px;width:1px;height:27px;background:#c3c3c3"></div><div style="position:absolute;left:532px;top:585px;width:1px;height:27px;background:#c3c3c3"></div><div style="position:absolute;left:578px;top:585px;width:1px;height:27px;background:#c3c3c3"></div><div style="position:absolute;left:641px;top:585px;width:1px;height:27px;background:#c3c3c3"></div><div style="position:absolute;left:705px;top:585px;width:1px;height:27px;background:#c3c3c3"></div><div style="position:absolute;left:770px;top:585px;width:1px;height:27px;background:#c3c3c3"></div><div style="position:absolute;left:809px;top:585px;width:1px;height:27px;background:#c3c3c3"></div><div style="position:absolute;left:849px;top:585px;width:1px;height:27px;background:#c3c3c3"></div><div style="position:absolute;left:907px;top:585px;width:1px;height:27px;background:#c3c3c3"></div><div class="d" style="left:0px;top:585px;width:45px;height:27px;line-height:27px;"><span style="color:#fff"><span class="c">韓</span><span class=lk>K</span><span class="c">聯</span></span></div><div class="d" style="left:48px;top:585px;width:76px;height:27px;line-height:27px;">25-06-17</div><div class="d" style="left:125px;top:585px;width:85px;height:27px;line-height:27px;"><span style="color:#111"><span class="c">大邱</span><span class="lt">FC</span></span></div><div class="d" style="left:211px;top:585px;width:88px;height:27px;line-height:27px;"><span style="color:#ff0000">1-1</span>(0-1)</div><div class="d" style="left:300px;top:585px;width:38px;height:27px;line-height:27px;">2-4</div><div class="d" style="left:339px;top:585px;width:85px;height:27px;line-height:27px;"><span style="color:#008000"><span class="c">浦項制鐵</span></span></div><div class="d" style="left:425px;top:585px;width:44px;height:27px;line-height:27px;">1.03</div><div class="d" style="left:470px;top:585px;width:62px;height:27px;line-height:27px;"><span style="color:#ff0000">*</span><span style="color:#2a5ca8"><span class="c">半球</span></span></div><div class="d" style="left:533px;top:585px;width:45px;height:27px;line-height:27px;">0.86</div><div class="d" style="left:579px;top:585px;width:62px;height:27px;line-height:27px;">4.10</div><div class="d" style="left:642px;top:585px;width:63px;height:27px;line-height:27px;"><span style="color:#2a5ca8">3.43</span></div><div class="d" style="left:706px;top:585px;width:64px;height:27px;line-height:27px;">1.82</div><div class="d" style="left:771px;top:585px;width:38px;height:27px;line-height:27px;"><span class="rs" style="color:#0000ff"><span class="c">平</span></span></div><div class="d" style="left:810px;top:585px;width:39px;height:27px;line-height:27px;"><span class="rs" style="color:#008000"><span class="c">輸</span></span></div><div class="d" style="left:850px;top:585px;width:55px;height:27px;line-height:27px;"><span class="rs" style="color:#008000"><span class="c">小</span></span></div><div style="position:absolute;left:0px;top:613px;width:908px;height:27px;background:#efefef"></div><div style="position:absolute;left:425px;top:613px;width:153px;height:27px;background:#fdf9f7"></div><div style="position:absolute;left:579px;top:613px;width:191px;height:27px;background:#f0f7fb"></div><div style="position:absolute;left:0px;top:613px;width:47px;height:27px;background:#0039b3"></div><div style="position:absolute;left:0px;top:640px;width:908px;height:1px;background:#c3c3c3"></div><div style="position:absolute;left:47px;top:613px;width:1px;height:27px;background:#c3c3c3"></div><div style="position:absolute;left:124px;top:613px;width:1px;height:27px;background:#c3c3c3"></div><div style="position:absolute;left:210px;top:613px;width:1px;height:27px;background:#c3c3c3"></div><div style="position:absolute;left:299px;top:613px;width:1px;height:27px;background:#c3c3c3"></div><div style="position:absolute;left:338px;top:613px;width:1px;height:27px;background:#c3c3c3"></div><div style="position:absolute;left:424px;top:613px;width:1px;height:27px;background:#c3c3c3"></div><div style="position:absolute;left:469px;top:613px;width:1px;height:27px;background:#c3c3c3"></div><div style="position:absolute;left:532px;top:613px;width:1px;height:27px;background:#c3c3c3"></div><div style="position:absolute;left:578px;top:613px;width:1px;height:27px;background:#c3c3c3"></div><div style="position:absolute;left:641px;top:613px;width:1px;height:27px;background:#c3c3c3"></div><div style="position:absolute;left:705px;top:613px;width:1px;height:27px;background:#c3c3c3"></div><div style="position:absolute;left:770px;top:613px;width:1px;height:27px;background:#c3c3c3"></div><div style="position:absolute;left:809px;top:613px;width:1px;height:27px;background:#c3c3c3"></div><div style="position:absolute;left:849px;top:613px;width:1px;height:27px;background:#c3c3c3"></div><div style="position:absolute;left:907px;top:613px;width:1px;height:27px;background:#c3c3c3"></div><div class="d" style="left:0px;top:613px;width:45px;height:27px;line-height:27px;"><span style="color:#fff"><span class="c">韓</span><span class=lk>K</span><span class="c">聯</span></span></div><div class="d" style="left:48px;top:613px;width:76px;height:27px;line-height:27px;">25-06-14</div><div class="d" style="left:125px;top:613px;width:85px;height:27px;line-height:27px;"><span style="color:#111"><span class="c">金泉尚武</span></span></div><div class="d" style="left:211px;top:613px;width:88px;height:27px;line-height:27px;"><span style="color:#ff0000">1-0</span>(1-0)</div><div class="d" style="left:300px;top:613px;width:38px;height:27px;line-height:27px;">3-3</div><div class="d" style="left:339px;top:613px;width:85px;height:27px;line-height:27px;"><span style="color:#008000"><span class="c">浦項制鐵</span></span></div><div class="d" style="left:425px;top:613px;width:44px;height:27px;line-height:27px;">0.80</div><div class="d" style="left:470px;top:613px;width:62px;height:27px;line-height:27px;"><span style="color:#2a5ca8"><span class="c">平手</span></span></div><div class="d" style="left:533px;top:613px;width:45px;height:27px;line-height:27px;">1.09</div><div class="d" style="left:579px;top:613px;width:62px;height:27px;line-height:27px;">2.30</div><div class="d" style="left:642px;top:613px;width:63px;height:27px;line-height:27px;"><span style="color:#2a5ca8">3.33</span></div><div class="d" style="left:706px;top:613px;width:64px;height:27px;line-height:27px;">2.86</div><div class="d" style="left:771px;top:613px;width:38px;height:27px;line-height:27px;"><span class="rs" style="color:#008000"><span class="c">負</span></span></div><div class="d" style="left:810px;top:613px;width:39px;height:27px;line-height:27px;"><span class="rs" style="color:#008000"><span class="c">輸</span></span></div><div class="d" style="left:850px;top:613px;width:55px;height:27px;line-height:27px;"><span class="rs" style="color:#008000"><span class="c">小</span></span></div><div style="position:absolute;left:0px;top:641px;width:908px;height:27px;background:#ffffff"></div><div style="position:absolute;left:425px;top:641px;width:153px;height:27px;background:#fdf9f7"></div><div style="position:absolute;left:579px;top:641px;width:191px;height:27px;background:#f0f7fb"></div><div style="position:absolute;left:0px;top:641px;width:47px;height:27px;background:#0039b3"></div><div style="position:absolute;left:0px;top:668px;width:908px;height:1px;background:#c3c3c3"></div><div style="position:absolute;left:47px;top:641px;width:1px;height:27px;background:#c3c3c3"></div><div style="position:absolute;left:124px;top:641px;width:1px;height:27px;background:#c3c3c3"></div><div style="position:absolute;left:210px;top:641px;width:1px;height:27px;background:#c3c3c3"></div><div style="position:absolute;left:299px;top:641px;width:1px;height:27px;background:#c3c3c3"></div><div style="position:absolute;left:338px;top:641px;width:1px;height:27px;background:#c3c3c3"></div><div style="position:absolute;left:424px;top:641px;width:1px;height:27px;background:#c3c3c3"></div><div style="position:absolute;left:469px;top:641px;width:1px;height:27px;background:#c3c3c3"></div><div style="position:absolute;left:532px;top:641px;width:1px;height:27px;background:#c3c3c3"></div><div style="position:absolute;left:578px;top:641px;width:1px;height:27px;background:#c3c3c3"></div><div style="position:absolute;left:641px;top:641px;width:1px;height:27px;background:#c3c3c3"></div><div style="position:absolute;left:705px;top:641px;width:1px;height:27px;background:#c3c3c3"></div><div style="position:absolute;left:770px;top:641px;width:1px;height:27px;background:#c3c3c3"></div><div style="position:absolute;left:809px;top:641px;width:1px;height:27px;background:#c3c3c3"></div><div style="position:absolute;left:849px;top:641px;width:1px;height:27px;background:#c3c3c3"></div><div style="position:absolute;left:907px;top:641px;width:1px;height:27px;background:#c3c3c3"></div><div class="d" style="left:0px;top:641px;width:45px;height:27px;line-height:27px;"><span style="color:#fff"><span class="c">韓</span><span class=lk>K</span><span class="c">聯</span></span></div><div class="d" style="left:48px;top:641px;width:76px;height:27px;line-height:27px;">25-06-01</div><div class="d" style="left:125px;top:641px;width:85px;height:27px;line-height:27px;"><span style="color:#008000"><span class="c">浦項制鐵</span></span></div><div class="d" style="left:211px;top:641px;width:88px;height:27px;line-height:27px;"><span style="color:#ff0000">2-1</span>(1-1)</div><div class="d" style="left:300px;top:641px;width:38px;height:27px;line-height:27px;">4-5</div><div class="d" style="left:339px;top:641px;width:85px;height:27px;line-height:27px;"><span style="color:#111"><span class="lt">FC</span><span class="c">江原</span></span></div><div class="d" style="left:425px;top:641px;width:44px;height:27px;line-height:27px;">1.11</div><div class="d" style="left:470px;top:641px;width:62px;height:27px;line-height:27px;"><span style="color:#2a5ca8"><span class="c">半球</span></span></div><div class="d" style="left:533px;top:641px;width:45px;height:27px;line-height:27px;">0.79</div><div class="d" style="left:579px;top:641px;width:62px;height:27px;line-height:27px;">2.04</div><div class="d" style="left:642px;top:641px;width:63px;height:27px;line-height:27px;"><span style="color:#2a5ca8">3.06</span></div><div class="d" style="left:706px;top:641px;width:64px;height:27px;line-height:27px;">3.73</div><div class="d" style="left:771px;top:641px;width:38px;height:27px;line-height:27px;"><span class="rs" style="color:#ff0000"><span class="c">勝</span></span></div><div class="d" style="left:810px;top:641px;width:39px;height:27px;line-height:27px;"><span class="rs" style="color:#ff0000"><span class="c">贏</span></span></div><div class="d" style="left:850px;top:641px;width:55px;height:27px;line-height:27px;"><span class="rs" style="color:#ff0000"><span class="c">大</span></span></div><div style="position:absolute;left:0px;top:669px;width:908px;height:27px;background:#efefef"></div><div style="position:absolute;left:425px;top:669px;width:153px;height:27px;background:#fdf9f7"></div><div style="position:absolute;left:579px;top:669px;width:191px;height:27px;background:#f0f7fb"></div><div style="position:absolute;left:0px;top:669px;width:47px;height:27px;background:#0039b3"></div><div style="position:absolute;left:0px;top:696px;width:908px;height:1px;background:#c3c3c3"></div><div style="position:absolute;left:47px;top:669px;width:1px;height:27px;background:#c3c3c3"></div><div style="position:absolute;left:124px;top:669px;width:1px;height:27px;background:#c3c3c3"></div><div style="position:absolute;left:210px;top:669px;width:1px;height:27px;background:#c3c3c3"></div><div style="position:absolute;left:299px;top:669px;width:1px;height:27px;background:#c3c3c3"></div><div style="position:absolute;left:338px;top:669px;width:1px;height:27px;background:#c3c3c3"></div><div style="position:absolute;left:424px;top:669px;width:1px;height:27px;background:#c3c3c3"></div><div style="position:absolute;left:469px;top:669px;width:1px;height:27px;background:#c3c3c3"></div><div style="position:absolute;left:532px;top:669px;width:1px;height:27px;background:#c3c3c3"></div><div style="position:absolute;left:578px;top:669px;width:1px;height:27px;background:#c3c3c3"></div><div style="position:absolute;left:641px;top:669px;width:1px;height:27px;background:#c3c3c3"></div><div style="position:absolute;left:705px;top:669px;width:1px;height:27px;background:#c3c3c3"></div><div style="position:absolute;left:770px;top:669px;width:1px;height:27px;background:#c3c3c3"></div><div style="position:absolute;left:809px;top:669px;width:1px;height:27px;background:#c3c3c3"></div><div style="position:absolute;left:849px;top:669px;width:1px;height:27px;background:#c3c3c3"></div><div style="position:absolute;left:907px;top:669px;width:1px;height:27px;background:#c3c3c3"></div><div class="d" style="left:0px;top:669px;width:45px;height:27px;line-height:27px;"><span style="color:#fff"><span class="c">韓</span><span class=lk>K</span><span class="c">聯</span></span></div><div class="d" style="left:48px;top:669px;width:76px;height:27px;line-height:27px;">25-05-27</div><div class="d" style="left:125px;top:669px;width:85px;height:27px;line-height:27px;"><span style="color:#111"><span class="c">大田市民</span></span></div><div class="d" style="left:211px;top:669px;width:88px;height:27px;line-height:27px;"><span style="color:#ff0000">1-3</span>(1-2)</div><div class="d" style="left:300px;top:669px;width:38px;height:27px;line-height:27px;">1-3</div><div class="d" style="left:339px;top:669px;width:85px;height:27px;line-height:27px;"><span style="color:#008000"><span class="c">浦項制鐵</span></span></div><div class="d" style="left:425px;top:669px;width:44px;height:27px;line-height:27px;">1.06</div><div class="d" style="left:470px;top:669px;width:62px;height:27px;line-height:27px;"><span style="color:#ff0000">*</span><span style="color:#2a5ca8"><span class="c">平</span>/<span class="c">半</span></span></div><div class="d" style="left:533px;top:669px;width:45px;height:27px;line-height:27px;">0.83</div><div class="d" style="left:579px;top:669px;width:62px;height:27px;line-height:27px;">3.15</div><div class="d" style="left:642px;top:669px;width:63px;height:27px;line-height:27px;"><span style="color:#2a5ca8">3.19</span></div><div class="d" style="left:706px;top:669px;width:64px;height:27px;line-height:27px;">2.22</div><div class="d" style="left:771px;top:669px;width:38px;height:27px;line-height:27px;"><span class="rs" style="color:#ff0000"><span class="c">勝</span></span></div><div class="d" style="left:810px;top:669px;width:39px;height:27px;line-height:27px;"><span class="rs" style="color:#ff0000"><span class="c">贏</span></span></div><div class="d" style="left:850px;top:669px;width:55px;height:27px;line-height:27px;"><span class="rs" style="color:#ff0000"><span class="c">大</span></span></div><div style="position:absolute;left:0px;top:697px;width:908px;height:27px;background:#ffffff"></div><div style="position:absolute;left:425px;top:697px;width:153px;height:27px;background:#fdf9f7"></div><div style="position:absolute;left:579px;top:697px;width:191px;height:27px;background:#f0f7fb"></div><div style="position:absolute;left:0px;top:697px;width:47px;height:27px;background:#0039b3"></div><div style="position:absolute;left:0px;top:724px;width:908px;height:1px;background:#c3c3c3"></div><div style="position:absolute;left:47px;top:697px;width:1px;height:27px;background:#c3c3c3"></div><div style="position:absolute;left:124px;top:697px;width:1px;height:27px;background:#c3c3c3"></div><div style="position:absolute;left:210px;top:697px;width:1px;height:27px;background:#c3c3c3"></div><div style="position:absolute;left:299px;top:697px;width:1px;height:27px;background:#c3c3c3"></div><div style="position:absolute;left:338px;top:697px;width:1px;height:27px;background:#c3c3c3"></div><div style="position:absolute;left:424px;top:697px;width:1px;height:27px;background:#c3c3c3"></div><div style="position:absolute;left:469px;top:697px;width:1px;height:27px;background:#c3c3c3"></div><div style="position:absolute;left:532px;top:697px;width:1px;height:27px;background:#c3c3c3"></div><div style="position:absolute;left:578px;top:697px;width:1px;height:27px;background:#c3c3c3"></div><div style="position:absolute;left:641px;top:697px;width:1px;height:27px;background:#c3c3c3"></div><div style="position:absolute;left:705px;top:697px;width:1px;height:27px;background:#c3c3c3"></div><div style="position:absolute;left:770px;top:697px;width:1px;height:27px;background:#c3c3c3"></div><div style="position:absolute;left:809px;top:697px;width:1px;height:27px;background:#c3c3c3"></div><div style="position:absolute;left:849px;top:697px;width:1px;height:27px;background:#c3c3c3"></div><div style="position:absolute;left:907px;top:697px;width:1px;height:27px;background:#c3c3c3"></div><div class="d" style="left:0px;top:697px;width:45px;height:27px;line-height:27px;"><span style="color:#fff"><span class="c">韓</span><span class=lk>K</span><span class="c">聯</span></span></div><div class="d" style="left:48px;top:697px;width:76px;height:27px;line-height:27px;">25-05-23</div><div class="d" style="left:125px;top:697px;width:85px;height:27px;line-height:27px;"><span style="color:#111"><span class="lt">FC</span><span class="c">安養</span></span></div><div class="d" style="left:211px;top:697px;width:88px;height:27px;line-height:27px;"><span style="color:#ff0000">0-2</span>(0-0)</div><div class="d" style="left:300px;top:697px;width:38px;height:27px;line-height:27px;">3-3</div><div class="d" style="left:339px;top:697px;width:85px;height:27px;line-height:27px;"><span style="color:#008000"><span class="c">浦項制鐵</span></span></div><div class="d" style="left:425px;top:697px;width:44px;height:27px;line-height:27px;">0.88</div><div class="d" style="left:470px;top:697px;width:62px;height:27px;line-height:27px;"><span style="color:#ff0000">*</span><span style="color:#2a5ca8"><span class="c">平</span>/<span class="c">半</span></span></div><div class="d" style="left:533px;top:697px;width:45px;height:27px;line-height:27px;">1.01</div><div class="d" style="left:579px;top:697px;width:62px;height:27px;line-height:27px;">2.88</div><div class="d" style="left:642px;top:697px;width:63px;height:27px;line-height:27px;"><span style="color:#2a5ca8">3.15</span></div><div class="d" style="left:706px;top:697px;width:64px;height:27px;line-height:27px;">2.39</div><div class="d" style="left:771px;top:697px;width:38px;height:27px;line-height:27px;"><span class="rs" style="color:#ff0000"><span class="c">勝</span></span></div><div class="d" style="left:810px;top:697px;width:39px;height:27px;line-height:27px;"><span class="rs" style="color:#ff0000"><span class="c">贏</span></span></div><div class="d" style="left:850px;top:697px;width:55px;height:27px;line-height:27px;"><span class="rs" style="color:#008000"><span class="c">小</span></span></div><div style="position:absolute;left:0px;top:725px;width:908px;height:27px;background:#efefef"></div><div style="position:absolute;left:425px;top:725px;width:153px;height:27px;background:#fdf9f7"></div><div style="position:absolute;left:579px;top:725px;width:191px;height:27px;background:#f0f7fb"></div><div style="position:absolute;left:0px;top:725px;width:47px;height:27px;background:#0039b3"></div><div style="position:absolute;left:0px;top:752px;width:908px;height:1px;background:#c3c3c3"></div><div style="position:absolute;left:47px;top:725px;width:1px;height:27px;background:#c3c3c3"></div><div style="position:absolute;left:124px;top:725px;width:1px;height:27px;background:#c3c3c3"></div><div style="position:absolute;left:210px;top:725px;width:1px;height:27px;background:#c3c3c3"></div><div style="position:absolute;left:299px;top:725px;width:1px;height:27px;background:#c3c3c3"></div><div style="position:absolute;left:338px;top:725px;width:1px;height:27px;background:#c3c3c3"></div><div style="position:absolute;left:424px;top:725px;width:1px;height:27px;background:#c3c3c3"></div><div style="position:absolute;left:469px;top:725px;width:1px;height:27px;background:#c3c3c3"></div><div style="position:absolute;left:532px;top:725px;width:1px;height:27px;background:#c3c3c3"></div><div style="position:absolute;left:578px;top:725px;width:1px;height:27px;background:#c3c3c3"></div><div style="position:absolute;left:641px;top:725px;width:1px;height:27px;background:#c3c3c3"></div><div style="position:absolute;left:705px;top:725px;width:1px;height:27px;background:#c3c3c3"></div><div style="position:absolute;left:770px;top:725px;width:1px;height:27px;background:#c3c3c3"></div><div style="position:absolute;left:809px;top:725px;width:1px;height:27px;background:#c3c3c3"></div><div style="position:absolute;left:849px;top:725px;width:1px;height:27px;background:#c3c3c3"></div><div style="position:absolute;left:907px;top:725px;width:1px;height:27px;background:#c3c3c3"></div><div class="d" style="left:0px;top:725px;width:45px;height:27px;line-height:27px;"><span style="color:#fff"><span class="c">韓</span><span class=lk>K</span><span class="c">聯</span></span></div><div class="d" style="left:48px;top:725px;width:76px;height:27px;line-height:27px;">25-05-18</div><div class="d" style="left:125px;top:725px;width:85px;height:27px;line-height:27px;"><span style="color:#008000"><span class="c">浦項制鐵</span></span></div><div class="d" style="left:211px;top:725px;width:88px;height:27px;line-height:27px;"><span style="color:#ff0000">0-1</span>(0-0)</div><div class="d" style="left:300px;top:725px;width:38px;height:27px;line-height:27px;">3-2</div><div class="d" style="left:339px;top:725px;width:85px;height:27px;line-height:27px;"><span style="color:#111"><span class="lt">FC</span><span class="c">光州</span></span></div><div class="d" style="left:425px;top:725px;width:44px;height:27px;line-height:27px;">0.87</div><div class="d" style="left:470px;top:725px;width:62px;height:27px;line-height:27px;"><span style="color:#2a5ca8"><span class="c">平手</span></span></div><div class="d" style="left:533px;top:725px;width:45px;height:27px;line-height:27px;">1.02</div><div class="d" style="left:579px;top:725px;width:62px;height:27px;line-height:27px;">2.49</div><div class="d" style="left:642px;top:725px;width:63px;height:27px;line-height:27px;"><span style="color:#2a5ca8">3.03</span></div><div class="d" style="left:706px;top:725px;width:64px;height:27px;line-height:27px;">2.82</div><div class="d" style="left:771px;top:725px;width:38px;height:27px;line-height:27px;"><span class="rs" style="color:#008000"><span class="c">負</span></span></div><div class="d" style="left:810px;top:725px;width:39px;height:27px;line-height:27px;"><span class="rs" style="color:#008000"><span class="c">輸</span></span></div><div class="d" style="left:850px;top:725px;width:55px;height:27px;line-height:27px;"><span class="rs" style="color:#008000"><span class="c">小</span></span></div></body></html>
